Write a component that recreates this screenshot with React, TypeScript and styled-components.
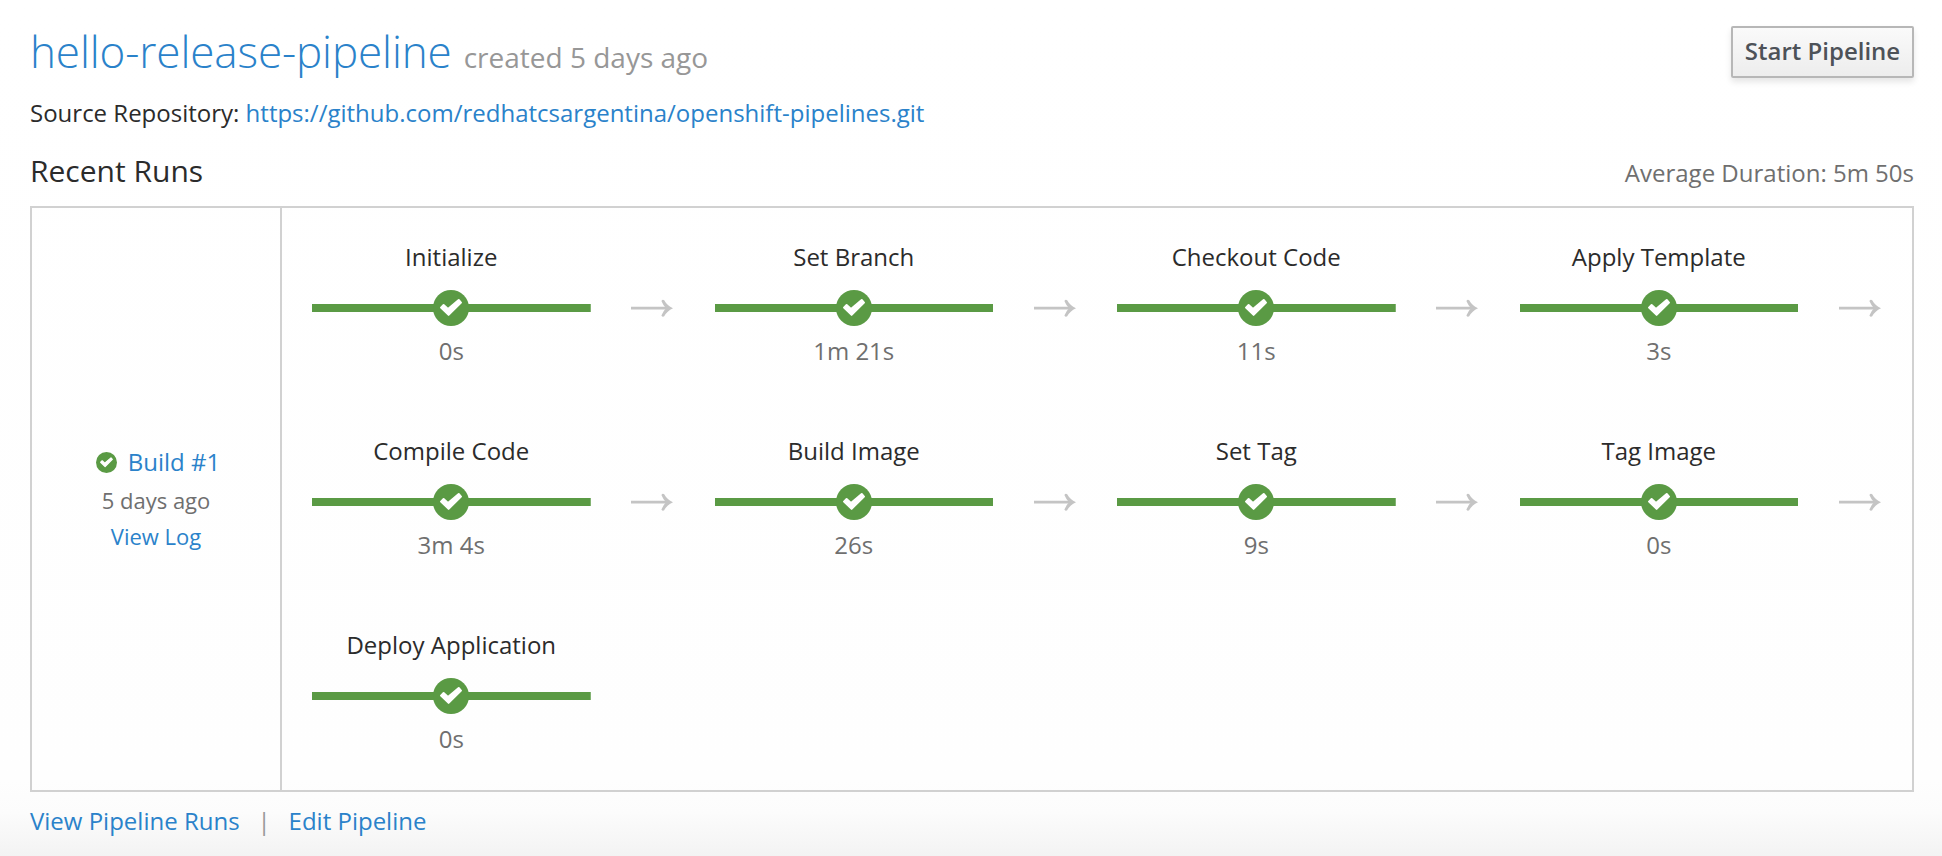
import React from "react";
import styled, { createGlobalStyle } from "styled-components";

const GlobalStyle = createGlobalStyle`
  * { box-sizing: border-box; }
  body {
    margin: 0;
    background: #fff;
    color: #2b2b2b;
    font: 24px/40px "Open Sans", "Liberation Sans", sans-serif;
  }
`;

const Page = styled.main`
  display: flex;
  flex-direction: column;
  width: 1942px;
  height: 856px;
  padding: 20px 28px 0 30px;
  background: linear-gradient(#fff 0, #fefefe 780px, #fcfcfc 812px, #f3f3f3 856px);
`;

const Header = styled.header`
  display: flex;
  justify-content: space-between;
  align-items: flex-start;
  height: 73px;
`;

const Title = styled.h1`
  margin: 0;
  font-size: 44px;
  font-weight: 300;
  line-height: 62px;
`;

const Link = styled.a`
  color: #2a82ca;
  text-decoration: none;
`;

const PipelineName = styled(Link)`
  letter-spacing: -0.11px;
`;

const Created = styled.small`
  margin-left: 12px;
  color: #979797;
  font-size: 28px;
  font-weight: 400;
`;

const StartButton = styled.button`
  width: 183px;
  height: 52px;
  margin-top: 6px;
  padding: 0 0 3px;
  border: 2px solid #b7b7b7;
  border-radius: 2px;
  background: linear-gradient(#fafafa, #ededed);
  box-shadow: 0 4px 6px rgba(3, 3, 3, 0.1);
  color: #4d5258;
  font: 600 24px/40px "Open Sans", "Liberation Sans", sans-serif;
  white-space: nowrap;
`;

const Source = styled.div`
  height: 58px;
`;

const RunsHeader = styled.div`
  display: flex;
  justify-content: space-between;
  align-items: baseline;
  height: 55px;
`;

const RunsTitle = styled.h2`
  margin: 0;
  font-size: 30px;
  font-weight: 400;
`;

const Muted = styled.span`
  color: #6f6f6f;
`;

const Run = styled.section`
  display: flex;
  height: 586px;
  border: 2px solid #d1d1d1;
`;

const Summary = styled.div`
  display: flex;
  flex-direction: column;
  align-items: center;
  width: 250px;
  padding-top: 234px;
  border-right: 2px solid #d1d1d1;
`;

const BuildName = styled.div`
  display: flex;
  align-items: center;
  gap: 11px;
  padding-left: 4px;
`;

const SummaryLine = styled.div`
  color: #6f6f6f;
  font-size: 22px;
  line-height: 36px;
`;

const Stages = styled.div`
  display: grid;
  grid-template-columns: repeat(4, 1fr);
  grid-auto-rows: 194px;
  flex: 1;
  padding: 32px 10px 0;
`;

const Stage = styled.div`
  display: grid;
  grid-template-columns: 278.5px 1fr;
  grid-template-rows: 34px 68px 34px;
  padding-left: 20px;
  text-align: center;
  line-height: 34px;
`;

const StageName = styled.div`
  grid-column: 1;
`;

const StageBar = styled.div`
  grid-column: 1;
  grid-row: 2;
  display: flex;
  align-items: center;
  justify-content: center;
  height: 68px;
  background: linear-gradient(#5a9a44, #5a9a44) center / 100% 8px no-repeat;
`;

const StageTime = styled.div`
  grid-column: 1;
  grid-row: 3;
  margin-top: -8px;
  color: #6f6f6f;
`;

const ArrowCell = styled.div`
  grid-column: 2;
  grid-row: 2;
  display: flex;
  align-items: center;
  padding-left: 40.5px;
`;

const Footer = styled.nav`
  display: flex;
  padding-top: 9px;
`;

const Divider = styled.span`
  width: 49px;
  text-align: center;
  color: #979797;
`;

const CheckIcon = ({ size }: { size: number }) => (
  <svg width={size} height={size} viewBox="0 0 36 36">
    <circle cx="18" cy="18" r="18" fill="#5a9a44" />
    <path
      d="M8 17.6 10.6 15 15 19 25.7 10 28 12.6 15.6 24.9Z"
      fill="#fff"
      stroke="#fff"
      strokeWidth="2"
      strokeLinejoin="round"
    />
  </svg>
);

const Arrow = () => (
  <svg width="42" height="18" viewBox="0 0 42 18">
    <path d="M0 9.2H38" stroke="#c4c4c4" strokeWidth="2.7" />
    <path
      d="M30.4 2Q31.5 0 33.2 1.2Q36 6.4 42 9.2Q36 12 33.2 17.2Q31.5 18.4 30.4 16.4Q32.2 12 35 9.2Q32.2 6.4 30.4 2Z"
      fill="#c4c4c4"
    />
  </svg>
);

const stages = [
  ["Initialize", "0s"],
  ["Set Branch", "1m 21s"],
  ["Checkout Code", "11s"],
  ["Apply Template", "3s"],
  ["Compile Code", "3m 4s"],
  ["Build Image", "26s"],
  ["Set Tag", "9s"],
  ["Tag Image", "0s"],
  ["Deploy Application", "0s"],
];

export default function App() {
  return (
    <>
      <GlobalStyle />
      <Page>
        <Header>
          <Title>
            <PipelineName>hello-release-pipeline</PipelineName>
            <Created>created 5 days ago</Created>
          </Title>
          <StartButton>Start Pipeline</StartButton>
        </Header>
        <Source>
          Source Repository: <Link>https://github.com/redhatcsargentina/openshift-pipelines.git</Link>
        </Source>
        <RunsHeader>
          <RunsTitle>Recent Runs</RunsTitle>
          <Muted>Average Duration: 5m 50s</Muted>
        </RunsHeader>
        <Run>
          <Summary>
            <BuildName>
              <CheckIcon size={21} />
              <Link>Build #1</Link>
            </BuildName>
            <SummaryLine>5 days ago</SummaryLine>
            <SummaryLine>
              <Link>View Log</Link>
            </SummaryLine>
          </Summary>
          <Stages>
            {stages.map(([name, time], i) => (
              <Stage key={name}>
                <StageName>{name}</StageName>
                <StageBar>
                  <CheckIcon size={36} />
                </StageBar>
                {i < stages.length - 1 && (
                  <ArrowCell>
                    <Arrow />
                  </ArrowCell>
                )}
                <StageTime>{time}</StageTime>
              </Stage>
            ))}
          </Stages>
        </Run>
        <Footer>
          <Link>View Pipeline Runs</Link>
          <Divider>|</Divider>
          <Link>Edit Pipeline</Link>
        </Footer>
      </Page>
    </>
  );
}
